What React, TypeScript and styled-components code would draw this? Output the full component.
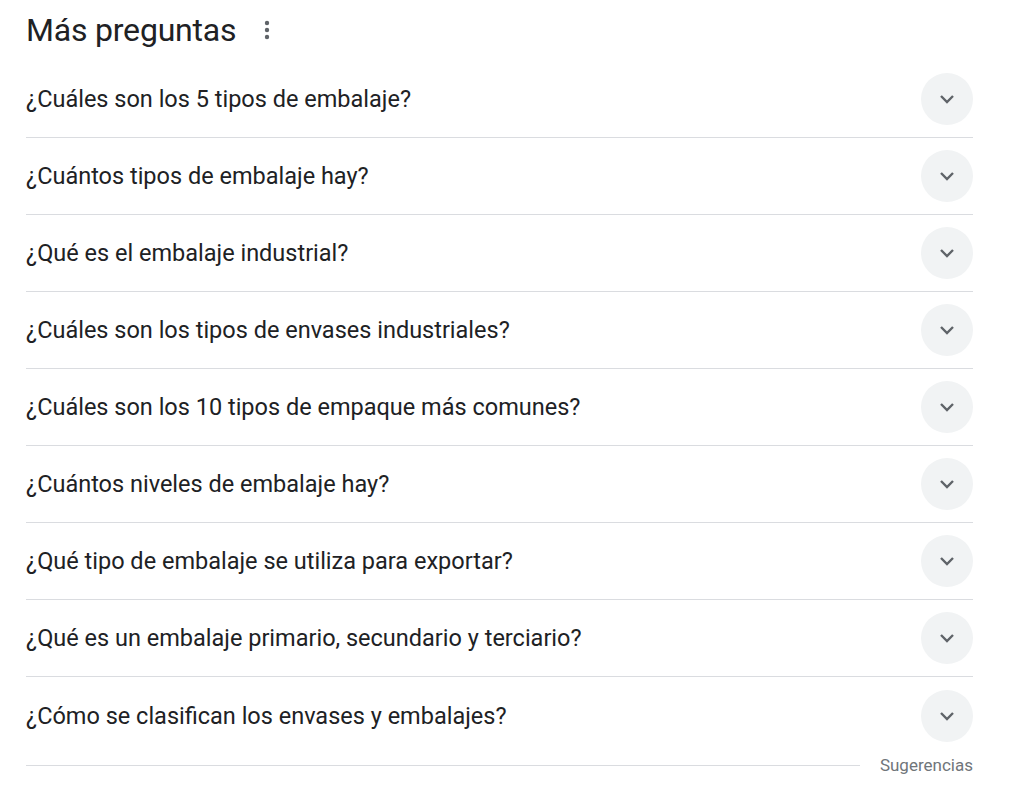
import styled, { createGlobalStyle } from "styled-components";

const GlobalStyle = createGlobalStyle`
  body {
    margin: 0;
    background: #fff;
    font-family: Roboto, "Liberation Sans", Arial, sans-serif;
  }
`;

const Wrapper = styled.div`
  width: 947px;
  padding: 8px 0 0 26px;
`;

const Header = styled.div`
  display: flex;
  align-items: center;
  height: 44px;
  margin-bottom: 9px;
`;

const Title = styled.h2`
  margin: 0;
  font-size: 32px;
  font-weight: 400;
  color: #202124;
  letter-spacing: -0.2px;
`;

const MenuButton = styled.div`
  width: 24px;
  height: 24px;
  margin-left: 19px;
  display: flex;
  align-items: center;
  justify-content: center;
  color: #5f6368;
`;

const Row = styled.div<{ $last?: boolean }>`
  display: flex;
  align-items: center;
  height: ${(p) => (p.$last ? "77px" : "76px")};
  border-bottom: ${(p) => (p.$last ? "0" : "1px solid #dadce0")};
`;

const Question = styled.div`
  flex-grow: 1;
  font-size: 23.5px;
  color: #202124;
`;

const Toggle = styled.div`
  width: 52px;
  height: 52px;
  border-radius: 50%;
  background-color: #f1f3f4;
  display: flex;
  align-items: center;
  justify-content: center;
  color: #5f6368;
`;

const Footer = styled.div`
  display: flex;
  align-items: center;
  height: 22px;
`;

const FooterLine = styled.div`
  flex-grow: 1;
  height: 1px;
  background-color: #dadce0;
  margin-right: 20px;
`;

const FooterLabel = styled.span`
  font-size: 17px;
  color: #70757a;
`;

const questions = [
  "¿Cuáles son los 5 tipos de embalaje?",
  "¿Cuántos tipos de embalaje hay?",
  "¿Qué es el embalaje industrial?",
  "¿Cuáles son los tipos de envases industriales?",
  "¿Cuáles son los 10 tipos de empaque más comunes?",
  "¿Cuántos niveles de embalaje hay?",
  "¿Qué tipo de embalaje se utiliza para exportar?",
  "¿Qué es un embalaje primario, secundario y terciario?",
  "¿Cómo se clasifican los envases y embalajes?",
];

const Chevron = () => (
  <svg width="16" height="10" viewBox="0 0 16 10">
    <path d="M2 2 L8 8 L14 2" fill="none" stroke="currentColor" strokeWidth="2.4" />
  </svg>
);

const Dots = () => (
  <svg width="6" height="20" viewBox="0 0 6 20">
    <circle cx="3" cy="3" r="2.2" fill="currentColor" />
    <circle cx="3" cy="10" r="2.2" fill="currentColor" />
    <circle cx="3" cy="17" r="2.2" fill="currentColor" />
  </svg>
);

export default function App() {
  return (
    <Wrapper>
      <GlobalStyle />
      <Header>
        <Title>Más preguntas</Title>
        <MenuButton>
          <Dots />
        </MenuButton>
      </Header>
      {questions.map((q, i) => (
        <Row key={q} $last={i === questions.length - 1}>
          <Question>{q}</Question>
          <Toggle>
            <Chevron />
          </Toggle>
        </Row>
      ))}
      <Footer>
        <FooterLine />
        <FooterLabel>Sugerencias</FooterLabel>
      </Footer>
    </Wrapper>
  );
}
